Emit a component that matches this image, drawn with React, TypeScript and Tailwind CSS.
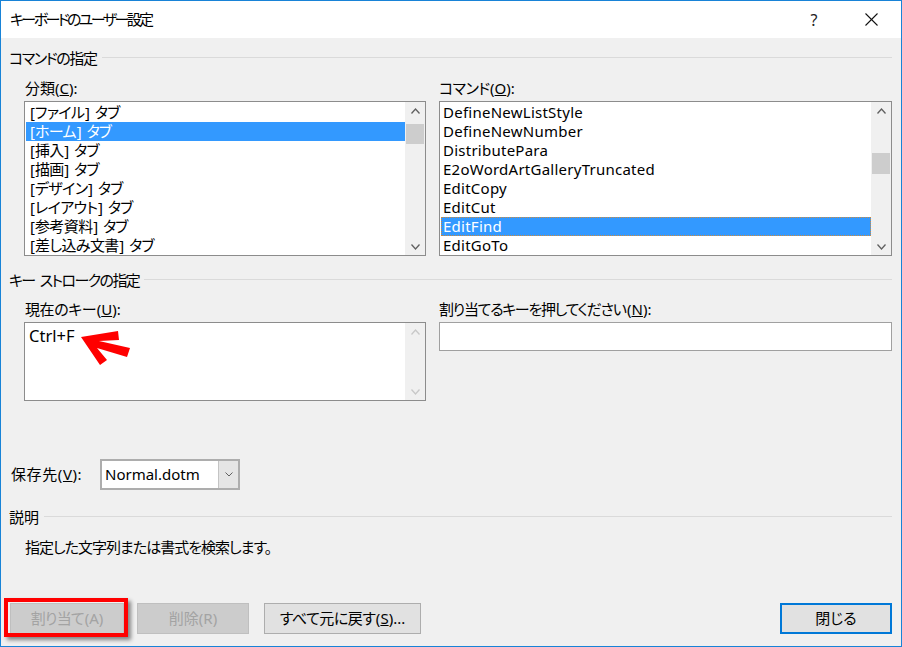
import React from "react";

const font = "font-['Noto_Sans','Noto_Sans_CJK_JP',sans-serif] [font-feature-settings:'palt']";

const categories = ["ファイル", "ホーム", "挿入", "描画", "デザイン", "レイアウト", "参考資料", "差し込み文書"];

const commands = [
  "DefineNewListStyle",
  "DefineNewNumber",
  "DistributePara",
  "E2oWordArtGalleryTruncated",
  "EditCopy",
  "EditCut",
  "EditFind",
  "EditGoTo",
];

// 和文だけ詰める (Yu Gothic UI のかなは狭い)
function J({ children, t = "tracking-[-1.2px]" }: { children: React.ReactNode; t?: string }) {
  return <span className={t}>{children}</span>;
}

function Chevron({ up, disabled }: { up?: boolean; disabled?: boolean }) {
  return (
    <svg width="9" height="6" viewBox="0 0 9 6" className="block">
      <polyline
        points={up ? "0.5,5.5 4.5,1 8.5,5.5" : "0.5,0.5 4.5,5 8.5,0.5"}
        fill="none"
        stroke={disabled ? "#c8c8c8" : "#606060"}
        strokeWidth="1.3"
      />
    </svg>
  );
}

function ScrollBar({ thumbTop, thumbH, disabled }: { thumbTop?: number; thumbH?: number; disabled?: boolean }) {
  return (
    <div className="relative w-[20px] h-full bg-[#f0f0f0] flex flex-col">
      <div className="h-[17px] flex items-center justify-center">
        <Chevron up disabled={disabled} />
      </div>
      <div className="flex-1" />
      <div className="h-[17px] flex items-center justify-center">
        <Chevron disabled={disabled} />
      </div>
      {thumbTop !== undefined && (
        <div
          className="absolute left-[1px] right-[1px] bg-[#cdcdcd]"
          style={{ top: thumbTop, height: thumbH }}
        />
      )}
    </div>
  );
}

function GroupHeader({ children }: { children: React.ReactNode }) {
  return (
    <div className="flex items-center h-[20px] gap-[5px]">
      <span className="text-[15px] leading-none text-black whitespace-nowrap">{children}</span>
      <div className="flex-1 h-px bg-[#dadada] mt-[-2px]" />
    </div>
  );
}

function Button({
  children,
  width,
  disabled,
  primary,
}: {
  children: React.ReactNode;
  width: string;
  disabled?: boolean;
  primary?: boolean;
}) {
  return (
    <div
      className={
        "h-[31px] flex items-center justify-center text-[15px] " +
        width +
        " " +
        (disabled
          ? "bg-[#cccccc] border border-[#bfbfbf] text-[#a3a3a3]"
          : primary
          ? "bg-[#e1e1e1] border-2 border-[#0078d7] text-black"
          : "bg-[#e1e1e1] border border-[#adadad] text-black")
      }
    >
      {children}
    </div>
  );
}

export default function App() {
  return (
    <div className={"w-[902px] h-[647px] border border-[#1883d7] bg-[#f0f0f0] flex flex-col overflow-hidden text-black " + font}>
      {/* title bar */}
      <div className="h-[37px] bg-white flex items-center pl-[9px] shrink-0">
        <span className="text-[15px] leading-none tracking-[-2.6px]">キーボードのユーザー設定</span>
        <div className="flex-1" />
        <span className="text-[16px] leading-none w-[20px] text-center mr-[41px] text-[#222]">?</span>
        <svg width="13" height="13" viewBox="0 0 13 13" className="mr-[23px]">
          <line x1="0.5" y1="0.5" x2="12.5" y2="12.5" stroke="#111" strokeWidth="1.1" />
          <line x1="12.5" y1="0.5" x2="0.5" y2="12.5" stroke="#111" strokeWidth="1.1" />
        </svg>
      </div>

      <div className="flex-1 flex flex-col pl-[8px] pr-[9px]">
        {/* コマンドの指定 */}
        <div className="mt-[10px]">
          <GroupHeader>
            <J t="tracking-[-1.4px]">コマンドの指定</J>
          </GroupHeader>
        </div>
        <div className="flex gap-[13px] pl-[15px] mt-[10px]">
          <div className="w-[402px] flex flex-col">
            <div className="h-[20px] flex items-center text-[15px] leading-none pl-[1px]">
              分類(<u>C</u>):
            </div>
            <div className="mt-[3px] h-[155px] border border-[#8c8c8c] bg-white flex">
              <div className="flex-1 pt-px">
                {categories.map((c, i) => (
                  <div
                    key={c}
                    className={
                      "h-[19px] flex items-center pl-[4px] ml-px text-[15px] leading-none whitespace-nowrap " +
                      (i === 1 ? "bg-[#3399ff] text-white" : "")
                    }
                  >
                    [<J t="tracking-[-0.6px] pr-[0.6px]">{c}</J>]<span className="ml-[5px] tracking-[-1px]">タブ</span>
                  </div>
                ))}
              </div>
              <ScrollBar thumbTop={22} thumbH={20} />
            </div>
          </div>
          <div className="flex-1 flex flex-col">
            <div className="h-[20px] flex items-center text-[15px] leading-none">
              <J t="tracking-[-0.6px] pr-[0.6px]">コマンド</J>(<u>O</u>):
            </div>
            <div className="mt-[3px] h-[155px] border border-[#8c8c8c] bg-white flex">
              <div className="flex-1 pt-px">
                {commands.map((c) => (
                  <div
                    key={c}
                    className={
                      "h-[19px] flex items-center ml-px text-[15px] tracking-[0.25px] leading-none whitespace-nowrap " +
                      (c === "EditFind"
                        ? "bg-[#3399ff] text-white border border-dotted border-[#d08a3a] pl-[1px]"
                        : "pl-[2px]")
                    }
                  >
                    {c}
                  </div>
                ))}
              </div>
              <ScrollBar thumbTop={51} thumbH={21} />
            </div>
          </div>
        </div>

        {/* キー ストロークの指定 */}
        <div className="mt-[14px]">
          <GroupHeader>
            <J t="tracking-[-1.6px]">キー</J>
            <J t="ml-[5px] tracking-[-1.6px]">ストロークの指定</J>
          </GroupHeader>
        </div>
        <div className="flex gap-[13px] pl-[15px] mt-[9px]">
          <div className="w-[402px] flex flex-col">
            <div className="h-[20px] flex items-center text-[15px] leading-none pl-[1px]">
              <J t="tracking-[-0.4px] pr-[0.4px]">現在のキー</J>(<u>U</u>):
            </div>
            <div className="relative mt-[3px] h-[79px] border border-[#8c8c8c] bg-white flex">
              <div className="flex-1 pl-[4px] pt-[3px] text-[16.5px] leading-[19px]">Ctrl+F</div>
              <ScrollBar disabled />
              {/* 赤い矢印 */}
              <svg
                width="64"
                height="46"
                viewBox="0 0 64 46"
                className="absolute left-[52px] top-[5px] pointer-events-none"
              >
                <polygon points="4,9 41,3 42,12 22,13 53,20 50,29 20,20 30,32 23,37" fill="#ff0000" />
              </svg>
            </div>
          </div>
          <div className="flex-1 flex flex-col">
            <div className="h-[20px] flex items-center text-[15px] leading-none">
              <J t="tracking-[-1.3px] pr-[1.5px]">割り当てるキーを押してください</J>(<u>N</u>):
            </div>
            <div className="mt-[3px] h-[29px] border border-[#a0a0a0] bg-white" />
          </div>
        </div>

        {/* 保存先 */}
        <div className="mt-[58px] h-[31px] flex items-center pl-[2px]">
          <span className="text-[15px] leading-none w-[89px] tracking-[0.6px]">
            保存先(<u>V</u>):
          </span>
          <div className="h-[31px] w-[140px] border-2 border-[#adadad] bg-white flex">
            <div className="flex-1 flex items-center pl-[3px] text-[15px] leading-none">Normal.dotm</div>
            <div className="w-[20px] bg-[#e5e5e5] border-l border-[#c4c4c4] flex items-center justify-center">
              <svg width="8" height="5" viewBox="0 0 8 5">
                <polyline points="0.5,0.5 4,4 7.5,0.5" fill="none" stroke="#606060" strokeWidth="1" />
              </svg>
            </div>
          </div>
        </div>

        {/* 説明 */}
        <div className="mt-[17px]">
          <GroupHeader>説明</GroupHeader>
        </div>
        <div className="mt-[10px] h-[20px] flex items-center pl-[16px] text-[15px] leading-none tracking-[-1px]">
          指定した文字列または書式を検索します。
        </div>

        {/* buttons */}
        <div className="mt-[46px] flex items-center pl-[1px]">
          <div className="relative">
            <Button width="w-[114px]" disabled>
              <J t="tracking-[-0.8px] pr-[0.8px]">割り当て</J>(A)
            </Button>
            <div className="absolute left-[-6px] top-[-5px] w-[124px] h-[39px] border-4 border-[#ff0000] shadow-[3px_3px_4px_rgba(0,0,0,0.45)] pointer-events-none" />
          </div>
          <div className="ml-[13px]">
            <Button width="w-[112px]" disabled>
              削除(R)
            </Button>
          </div>
          <div className="ml-[15px]">
            <Button width="w-[157px]">
              <J t="tracking-[-0.5px] pr-[0.5px]">すべて元に戻す</J>(<u>S</u>)...
            </Button>
          </div>
          <div className="flex-1" />
          <Button width="w-[112px]" primary>
            閉じる
          </Button>
        </div>
      </div>
    </div>
  );
}
